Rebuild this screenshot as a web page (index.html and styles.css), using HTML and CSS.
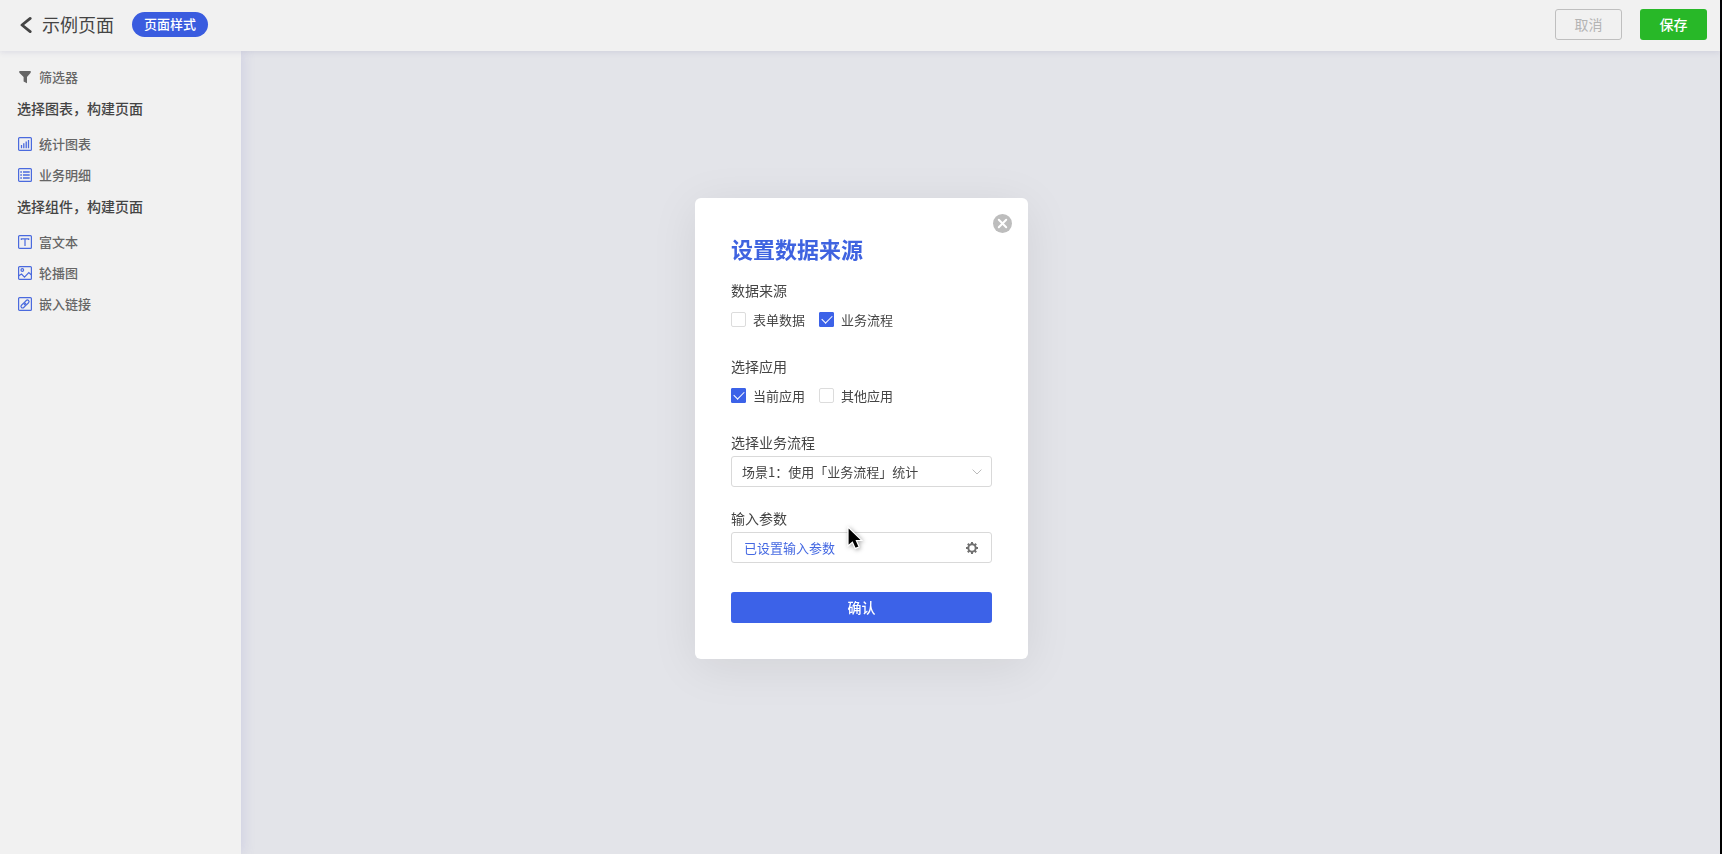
FILE: index.html
```html
<!DOCTYPE html>
<html lang="zh-CN">
<head>
<meta charset="utf-8">
<title>示例页面</title>
<link rel="stylesheet" href="styles.css">
</head>
<body>
<div class="app">
  <header class="topbar">
    <button class="back" type="button" aria-label="返回">
      <svg width="12" height="18" viewBox="0 0 12 18"><path d="M10.2 2.4 2 9l8.2 6.6" fill="none" stroke="currentColor" stroke-width="2.8" stroke-linecap="round" stroke-linejoin="round"/></svg>
    </button>
    <h1 class="page-title">示例页面</h1>
    <button class="pill" type="button">页面样式</button>
    <div class="actions">
      <button class="btn btn-cancel" type="button">取消</button>
      <button class="btn btn-save" type="button">保存</button>
    </div>
  </header>
  <div class="body">
    <nav class="sidebar">
      <button class="tool" type="button">
        <svg class="icon icon-filter" viewBox="0 0 14 14"><path d="M1.3 1h11.4v1.7L9 7v6.2l-3.4-1.6V7L1.3 2.7z" fill="currentColor"/></svg>
        筛选器
      </button>
      <h2 class="group-title">选择图表，构建页面</h2>
      <button class="tool" type="button">
        <svg class="icon" viewBox="0 0 14 14"><rect x=".6" y=".6" width="12.8" height="12.8" rx="1"/><path d="M3.5 11.3V8M5.8 11.3V6.2M8.2 11.3V4.6M10.5 11.3V3" stroke-width="1.3"/></svg>
        统计图表
      </button>
      <button class="tool" type="button">
        <svg class="icon" viewBox="0 0 14 14"><rect x=".6" y=".6" width="12.8" height="12.8" rx="1"/><path d="M2.3 4h1.6M5 4h6.7M2.3 7h1.6M5 7h6.7M2.3 10h1.6M5 10h6.7" stroke-width="1.4"/></svg>
        业务明细
      </button>
      <h2 class="group-title">选择组件，构建页面</h2>
      <button class="tool" type="button">
        <svg class="icon" viewBox="0 0 14 14"><rect x=".6" y=".6" width="12.8" height="12.8" rx="1"/><path d="M3.3 5V3.8h7.4V5M7 3.8V11"/></svg>
        富文本
      </button>
      <button class="tool" type="button">
        <svg class="icon" viewBox="0 0 14 14"><rect x=".6" y=".6" width="12.8" height="12.8" rx="1"/><circle cx="4.3" cy="4" r="1.3"/><path d="M.8 9.8 3.5 8l3 3.2 4.3-4.6 2.4 2.2"/></svg>
        轮播图
      </button>
      <button class="tool" type="button">
        <svg class="icon" viewBox="0 0 14 14"><rect x=".6" y=".6" width="12.8" height="12.8" rx="1"/><g transform="rotate(-45 7 7)"><rect x="2" y="5.4" width="5.8" height="3.2" rx="1.6"/><rect x="6.2" y="5.4" width="5.8" height="3.2" rx="1.6"/></g></svg>
        嵌入链接
      </button>
    </nav>
    <main class="canvas"></main>
  </div>

  <div class="overlay">
    <form class="modal" role="dialog" aria-labelledby="modal-title">
      <button class="close" type="button" aria-label="关闭">
        <svg width="19" height="19" viewBox="0 0 19 19"><circle cx="9.5" cy="9.5" r="9.5" fill="#bdbdbd"/><path d="m5.8 5.8 7.4 7.4m0-7.4-7.4 7.4" stroke="#fff" stroke-width="2" stroke-linecap="round"/></svg>
      </button>
      <h2 class="modal-title" id="modal-title">设置数据来源</h2>
      <fieldset class="field">
        <legend class="label">数据来源</legend>
        <div class="options">
          <label class="option"><input class="check" type="checkbox">表单数据</label>
          <label class="option"><input class="check" type="checkbox" checked>业务流程</label>
        </div>
      </fieldset>
      <fieldset class="field">
        <legend class="label">选择应用</legend>
        <div class="options">
          <label class="option"><input class="check" type="checkbox" checked>当前应用</label>
          <label class="option"><input class="check" type="checkbox">其他应用</label>
        </div>
      </fieldset>
      <div class="field">
        <label class="label" for="flow">选择业务流程</label>
        <div class="control">
          <select class="input" id="flow"><option>场景1：使用「业务流程」统计</option></select>
          <svg class="control-icon chevron" width="10" height="6" viewBox="0 0 10 6"><path d="m.6.6 4.4 4.4L9.4.6" fill="none" stroke="currentColor"/></svg>
        </div>
      </div>
      <div class="field">
        <label class="label" for="params">输入参数</label>
        <div class="control">
          <input class="input input-link" id="params" type="text" value="已设置输入参数" readonly>
          <svg class="control-icon gear" width="12" height="12" viewBox="0 0 12 12"><circle cx="6" cy="6" r="3.7" fill="none" stroke="currentColor" stroke-width="2"/><path d="M6 2V0M6 12v-2M2 6H0M12 6h-2M8.8 3.2l1.4-1.4M3.2 8.8l-1.4 1.4M3.2 3.2 1.8 1.8M8.8 8.8l1.4 1.4" stroke="currentColor" stroke-width="2"/></svg>
          <svg class="cursor" width="16" height="25" viewBox="0 0 16 25"><path d="M1 1v19l4.4-3.8 2.8 6.4 4-1.7-2.8-6.4H15z" fill="#000" stroke="#fff" stroke-width="1.2"/></svg>
        </div>
      </div>
      <button class="confirm" type="submit">确认</button>
    </form>
  </div>
</div>
</body>
</html>
```

FILE: styles.css
```css
* {
  box-sizing: border-box;
}

html {
  background: #000;
}

body {
  margin: 0;
  font-family: "Noto Sans CJK SC", "Noto Sans", sans-serif;
  font-size: 13px;
  color: #444;
}

button,
input,
select {
  margin: 0;
  padding: 0;
  border: 0;
  background: none;
  font: inherit;
  color: inherit;
}

h1,
h2 {
  margin: 0;
}

svg {
  display: block;
  flex: none;
}

.app {
  display: flex;
  flex-direction: column;
  min-height: 100vh;
  margin-right: 2px;
  background: #e3e4e9;
}

/* Top bar */

.topbar {
  position: relative;
  z-index: 1;
  display: flex;
  align-items: center;
  height: 51px;
  padding: 0 13px 2px 20px;
  background: #f1f1f1;
  box-shadow: 0 1px 6px rgba(80, 80, 140, 0.14);
}

.page-title {
  margin: 0 18px 0 10px;
  padding-bottom: 2px;
  font-size: 18px;
  font-weight: 400;
  line-height: 26px;
}

.pill {
  height: 25px;
  padding: 0 12px 2px;
  border-radius: 13px;
  background: #3a5cdf;
  color: #fff;
  font-weight: 500;
  line-height: 23px;
}

.actions {
  display: flex;
  gap: 18px;
  margin-left: auto;
}

.btn {
  width: 67px;
  height: 31px;
  padding-bottom: 2px;
  border-radius: 3px;
  font-size: 14px;
}

.btn-cancel {
  border: 1px solid #bfbfbf;
  color: #b4b4b4;
}

.btn-save {
  background: #28b828;
  color: #fff;
  font-weight: 500;
}

/* Sidebar and canvas */

.body {
  display: flex;
  flex: 1;
}

.sidebar {
  display: flex;
  flex-direction: column;
  width: 241px;
  padding: 10px 17px;
  background: #f1f1f1;
  box-shadow: 2px 0 12px rgba(100, 100, 190, 0.16);
}

.canvas {
  flex: 1;
}

.tool {
  display: flex;
  align-items: center;
  gap: 6px;
  height: 31px;
  color: #666;
  font-weight: 500;
}

.icon {
  width: 16px;
  height: 16px;
  padding: 0 1px;
  fill: none;
  stroke: #4a6ade;
  stroke-width: 1.2;
}

.icon-filter {
  stroke: none;
  color: #666;
}

.group-title {
  height: 34px;
  margin-bottom: 2px;
  font-size: 14px;
  font-weight: 500;
  line-height: 32px;
}

/* Dialog */

.overlay {
  position: fixed;
  inset: 0;
  z-index: 2;
  display: flex;
  align-items: center;
  justify-content: center;
  padding: 3px 0 0 1px;
}

.modal {
  position: relative;
  width: 333px;
  padding: 36px;
  border-radius: 6px;
  background: #fff;
  box-shadow: 0 8px 48px rgba(0, 0, 0, 0.08);
}

.close {
  position: absolute;
  top: 16px;
  right: 16px;
}

.modal-title {
  margin-bottom: 18px;
  color: #3f63e0;
  font-size: 22px;
  font-weight: 700;
  line-height: 28px;
}

.field {
  min-width: 0;
  margin: 0 0 21px;
  padding: 0;
  border: 0;
}

.label {
  display: block;
  margin-bottom: 4px;
  padding: 0;
  font-size: 14px;
  line-height: 20px;
}

.options {
  display: flex;
  gap: 14px;
  height: 31px;
}

.option {
  display: flex;
  align-items: center;
  gap: 7px;
}

.check {
  display: grid;
  place-items: center;
  appearance: none;
  width: 15px;
  height: 15px;
  border: 1px solid #dcdcdc;
  border-radius: 2px;
}

.check:checked {
  border-color: #3c62e8;
  border-radius: 1px;
  background: #3c62e8;
}

.check:checked::before {
  content: "";
  width: 9px;
  height: 5px;
  margin-bottom: 3px;
  border: solid #fff;
  border-width: 0 0 1px 1px;
  transform: rotate(-45deg);
}

.control {
  position: relative;
}

.input {
  display: block;
  appearance: none;
  width: 100%;
  height: 31px;
  padding: 0 32px 1px 10px;
  border: 1px solid #d9d9d9;
  border-radius: 3px;
  background: #fff;
}

.input-link {
  padding-left: 12px;
  color: #4468e2;
}

.control-icon {
  position: absolute;
  top: 0;
  bottom: 0;
  right: 14px;
  margin: auto 0;
  pointer-events: none;
}

.chevron {
  right: 10px;
  color: #bbb;
}

.gear {
  color: #707070;
}

.cursor {
  position: absolute;
  top: -6px;
  left: 116px;
  filter: drop-shadow(1px 1px 2px rgba(0, 0, 0, 0.35));
  pointer-events: none;
}

.confirm {
  display: block;
  width: 100%;
  height: 31px;
  margin-top: 29px;
  padding-bottom: 1px;
  border-radius: 3px;
  background: #3c62e8;
  color: #fff;
  font-size: 14px;
  font-weight: 500;
}
```
